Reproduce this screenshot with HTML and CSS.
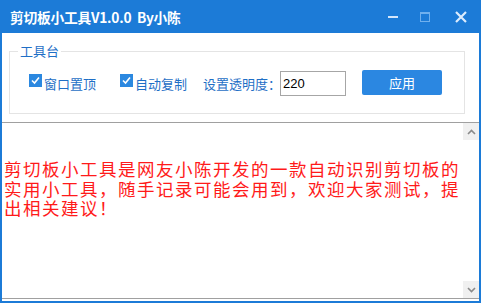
FILE: index.html
```html
<!DOCTYPE html>
<html lang="zh">
<head>
<meta charset="utf-8">
<link rel="stylesheet" href="styles.css">
</head>
<body>
<div class="window">
  <div class="titlebar">
    <div class="title">剪切板小工具V1.0.0&nbsp;&nbsp;By小陈</div>
    <div class="controls">
      <svg class="ic-min" width="10" height="10" viewBox="0 0 10 10"><rect x="0" y="4" width="10" height="2" fill="#d3e6fb"/></svg>
      <svg class="ic-max" width="10" height="10" viewBox="0 0 10 10"><rect x="0.5" y="0.5" width="9" height="9" fill="none" stroke="#6fb0ee"/><rect x="0" y="0" width="10" height="2" fill="#6fb0ee"/></svg>
      <svg class="ic-close" width="12" height="12" viewBox="0 0 12 12"><path d="M1 1 L11 11 M11 1 L1 11" stroke="#dcecfd" stroke-width="2.2"/></svg>
    </div>
  </div>
  <div class="panel">
    <div class="group">
      <span class="legend">工具台</span>
      <label class="check">
        <svg class="box" width="13" height="13" viewBox="0 0 13 13"><rect width="13" height="13" fill="#2b88e0"/><path d="M3 6.5 L5.5 9 L10 3.5" stroke="#fff" stroke-width="1.6" fill="none"/></svg>
        <span>窗口置顶</span>
      </label>
      <label class="check second">
        <svg class="box" width="13" height="13" viewBox="0 0 13 13"><rect width="13" height="13" fill="#2b88e0"/><path d="M3 6.5 L5.5 9 L10 3.5" stroke="#fff" stroke-width="1.6" fill="none"/></svg>
        <span>自动复制</span>
      </label>
      <span class="opacity-label">设置透明度：</span>
      <div class="input">220</div>
      <div class="btn">应用</div>
    </div>
  </div>
  <div class="textbox">
    <div class="content">
      <div class="line">剪切板小工具是网友小陈开发的一款自动识别剪切板的</div>
      <div class="line">实用小工具，随手记录可能会用到，欢迎大家测试，提</div>
      <div class="line">出相关建议！</div>
    </div>
    <div class="scrollbar">
      <div class="sb-btn">
        <svg width="9" height="6" viewBox="0 0 9 6"><path d="M1 5 L4.5 1.5 L8 5" stroke="#8a8a8a" stroke-width="1.6" fill="none"/></svg>
      </div>
      <div class="sb-track"></div>
      <div class="sb-btn">
        <svg width="9" height="6" viewBox="0 0 9 6"><path d="M1 1 L4.5 4.5 L8 1" stroke="#8a8a8a" stroke-width="1.6" fill="none"/></svg>
      </div>
    </div>
  </div>
</div>
</body>
</html>
```

FILE: styles.css
```css
html, body {
  margin: 0;
  padding: 0;
  background: #ffffff;
}
.window {
  width: 481px;
  height: 303px;
  box-sizing: border-box;
  display: flex;
  flex-direction: column;
  border-left: 2px solid #1c7bd7;
  border-right: 2px solid #1c7bd7;
  border-bottom: 2px solid #1c7bd7;
  background: #ffffff;
  font-family: "Noto Sans CJK SC", "Noto Sans", sans-serif;
}
.titlebar {
  height: 33px;
  margin: 0 -2px;
  background: #1c7bd7;
  display: flex;
  align-items: center;
  padding: 0 14px 0 10px;
  flex: none;
}
.title {
  color: #ffffff;
  font-size: 13.75px;
  font-weight: bold;
  letter-spacing: -0.25px;
  flex: 1;
  white-space: nowrap;
}
.controls {
  display: flex;
  align-items: center;
}
.ic-max { margin-left: 22px; }
.ic-close { margin-left: 25px; }
.panel {
  height: 89px;
  flex: none;
  display: flex;
  flex-direction: column;
}
.group {
  margin: 18px 14px 0 7px;
  height: 61px;
  border: 1px solid #e4e4e4;
  position: relative;
  display: flex;
  align-items: center;
  padding-left: 19px;
  color: #1f6fc6;
  font-size: 13px;
}
.legend {
  position: absolute;
  top: -9px;
  left: 8px;
  background: #ffffff;
  padding: 0 2px;
  font-size: 13px;
  line-height: 16px;
  color: #1f6fc6;
}
.check {
  display: flex;
  align-items: center;
  line-height: 16px;
}
.check .box {
  margin-right: 2px;
  margin-top: -4px;
}
.check span {
  font-size: 13px;
  margin-top: 3px;
}
.second { margin-left: 24px; }
.opacity-label {
  margin-left: 16px;
  margin-top: 3px;
  line-height: 16px;
  white-space: nowrap;
  font-size: 13px;
}
.input {
  margin-left: -1px;
  width: 66px;
  height: 25px;
  box-sizing: border-box;
  border: 1px solid #a6a6a6;
  font-family: "Liberation Sans", sans-serif;
  font-size: 13px;
  color: #000;
  line-height: 23px;
  padding-left: 2px;
  margin-top: 2px;
}
.btn {
  margin-left: 16px;
  width: 80px;
  height: 25px;
  background: #2b87e1;
  color: #ffffff;
  border-radius: 2px;
  font-size: 13px;
  line-height: 25px;
  text-align: center;
  margin-top: -1px;
}
.textbox {
  flex: 1;
  display: flex;
  border-top: 1px solid #a0a0a0;
  border-bottom: 1px solid #a0a0a0;
  margin-bottom: 2px;
  min-height: 0;
}
.content {
  flex: 1;
  padding: 38px 0 0 2px;
  color: #ff1a1a;
  font-family: "Liberation Serif", "Noto Sans CJK SC", serif;
  font-size: 17.5px;
  letter-spacing: 1.5px;
  white-space: nowrap;
  overflow: hidden;
}
.line {
  height: 19.5px;
  line-height: 19.5px;
}
.scrollbar {
  width: 17px;
  display: flex;
  flex-direction: column;
}
.sb-btn {
  height: 17px;
  width: 16px;
  background: #f0f0f0;
  display: flex;
  align-items: center;
  justify-content: center;
  margin-left: 1px;
}
.sb-track {
  flex: 1;
}
```
